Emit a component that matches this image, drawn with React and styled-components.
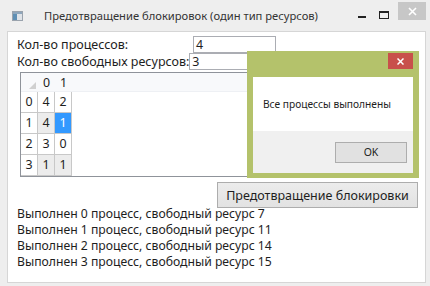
import styled, { createGlobalStyle } from 'styled-components'

const GlobalStyle = createGlobalStyle`
  html, body {
    margin: 0;
    padding: 0;
    background: #eeeeee;
    font-family: "Noto Sans", "Open Sans", sans-serif;
    color: #1e1e1e;
  }
`

const Window = styled.div`
  position: relative;
  width: 430px;
  height: 286px;
  box-sizing: border-box;
  display: flex;
  flex-direction: column;
  padding: 0 4px 3px 7px;
  background: #eeeeee;
  overflow: hidden;
`

const TitleBar = styled.div`
  height: 31px;
  display: flex;
  align-items: center;
  margin-left: -7px;
  margin-right: -4px;
`

const AppIcon = styled.svg`
  margin-left: 12px;
  width: 11px;
  height: 10px;
`

const Title = styled.div`
  margin-left: 21px;
  font-size: 11.2px;
  color: #333;
  flex: 1;
`

const Caption = styled.div`
  width: ${({ $w }) => $w}px;
  height: 18px;
  align-self: flex-start;
  margin-top: ${({ $top }) => $top || 0}px;
  display: flex;
  align-items: center;
  justify-content: center;
  background: ${({ $bg }) => $bg || 'transparent'};
`

const Client = styled.div`
  flex: 1;
  background: #fff;
  border: 1px solid #d6d6d6;
  padding: 3px 7px 0 9px;
  display: flex;
  flex-direction: column;
`

const FormRow = styled.div`
  display: flex;
  align-items: center;
  height: 17px;
  margin-top: ${({ $mt }) => $mt}px;
`

const Label = styled.div`
  font-size: 12.5px;
  width: ${({ $w }) => ($w ? `${$w}px` : 'auto')};
  white-space: nowrap;
`

const TextBox = styled.div`
  box-sizing: border-box;
  width: ${({ $w }) => $w}px;
  height: 17px;
  border: 1px solid #abadb3;
  font-size: 12.4px;
  line-height: 15px;
  padding-left: 2px;
`

const DataGrid = styled.div`
  margin: 2px 0 0 3px;
  width: 256px;
  height: 103px;
  border: 1px solid #8f939a;
  display: flex;
  flex-direction: column;
`

const HeaderRow = styled.div`
  height: 19px;
  display: flex;
  background: #f8f9fb;
  box-shadow: inset 0 -1px 0 #eef0f4;
`

const Corner = styled.div`
  position: relative;
  width: 17px;
  &::after {
    content: '';
    position: absolute;
    right: 2px;
    bottom: 3px;
    border-style: solid;
    border-width: 0 0 7px 7px;
    border-color: transparent transparent #d0d0d0 transparent;
  }
`

const ColHeader = styled.div`
  width: 17px;
  text-align: center;
  font-size: 12.4px;
  line-height: 19px;
`

const Row = styled.div`
  height: 21px;
  display: flex;
`

const RowHeader = styled.div`
  box-sizing: border-box;
  width: 17px;
  border-bottom: 1px solid #c8c8c8;
  border-right: 1px solid #c8c8c8;
  font-size: 12.4px;
  line-height: 20px;
  text-align: center;
`

const Cell = styled.div`
  box-sizing: border-box;
  width: 17px;
  border-bottom: 1px solid #c8c8c8;
  border-right: 1px solid #c8c8c8;
  font-size: 12.4px;
  line-height: 20px;
  text-align: center;
  background: ${({ $selected, $alt }) => ($selected ? '#3399ff' : $alt ? '#ececec' : '#fff')};
  color: ${({ $selected }) => ($selected ? '#fff' : '#1e1e1e')};
`

const ActionButton = styled.div`
  align-self: flex-end;
  margin-top: 5px;
  box-sizing: border-box;
  width: 201px;
  height: 26px;
  border: 1px solid #adadad;
  background: linear-gradient(#ececec, #e2e2e2);
  font-size: 12.5px;
  display: flex;
  align-items: center;
  justify-content: center;
`

const Log = styled.div`
  font-size: 12.2px;
  line-height: 16px;
  margin-top: -2px;
`

const Dialog = styled.div`
  position: absolute;
  left: 247px;
  top: 51px;
  width: 172px;
  height: 127px;
  box-sizing: border-box;
  background: #b4c26b;
  padding: 26px 6px 5px 6px;
  display: flex;
  flex-direction: column;
`

const DialogClose = styled.div`
  position: absolute;
  right: 6px;
  top: 2px;
  width: 25px;
  height: 16px;
  background: #c8504b;
  display: flex;
  align-items: center;
  justify-content: center;
`

const DialogBody = styled.div`
  height: 54px;
  background: #fff;
  display: flex;
  align-items: center;
  padding-left: 10px;
  font-size: 10.2px;
`

const DialogFooter = styled.div`
  flex: 1;
  background: #f0f0f0;
  display: flex;
  justify-content: flex-end;
  align-items: center;
  padding-right: 6px;
`

const OkButton = styled.div`
  box-sizing: border-box;
  width: 72px;
  height: 21px;
  border: 1px solid #adadad;
  background: #e1e1e1;
  font-size: 10.5px;
  display: flex;
  align-items: center;
  justify-content: center;
`

const matrix = [
  [4, 2],
  [4, 1],
  [3, 0],
  [1, 1],
]

const log = [7, 11, 14, 15]

export default function App() {
  return (
    <>
      <GlobalStyle />
      <Window>
        <TitleBar>
          <AppIcon viewBox="0 0 11 10">
            <rect x="0.5" y="0.5" width="10" height="9" fill="#dfe3e8" stroke="#9aa3ad" />
            <rect x="1" y="1" width="4" height="8" fill="#5f8fb4" />
            <rect x="1" y="1" width="9" height="2" fill="#8ea6bc" />
          </AppIcon>
          <Title>Предотвращение блокировок (один тип ресурсов)</Title>
          <Caption $w={22} $top={6}>
            <svg width="8" height="8" viewBox="0 0 8 8">
              <rect x="0" y="5" width="8" height="2" fill="#222" />
            </svg>
          </Caption>
          <Caption $w={22} $top={6}>
            <svg width="10" height="8" viewBox="0 0 10 8">
              <rect x="0.5" y="0.5" width="9" height="7" fill="none" stroke="#222" />
              <rect x="0" y="0" width="10" height="2" fill="#222" />
            </svg>
          </Caption>
          <Caption $w={28} $top={2} $bg="#c7c7c7" style={{ marginRight: 4, marginLeft: 3 }}>
            <svg width="9" height="9" viewBox="0 0 9 9">
              <path d="M1 1 L8 8 M8 1 L1 8" stroke="#fff" strokeWidth="1.6" />
            </svg>
          </Caption>
        </TitleBar>
        <Client>
          <FormRow $mt={1}>
            <Label $w={176}>Кол-во процессов:</Label>
            <TextBox $w={83}>4</TextBox>
          </FormRow>
          <FormRow $mt={0}>
            <Label>Кол-во свободных ресурсов:</Label>
            <TextBox $w={87}>3</TextBox>
          </FormRow>
          <DataGrid>
            <HeaderRow>
              <Corner />
              <ColHeader>0</ColHeader>
              <ColHeader>1</ColHeader>
            </HeaderRow>
            {matrix.map((row, i) => (
              <Row key={i}>
                <RowHeader>{i}</RowHeader>
                {row.map((v, j) => (
                  <Cell key={j} $alt={i % 2 === 1} $selected={i === 1 && j === 1}>
                    {v}
                  </Cell>
                ))}
              </Row>
            ))}
          </DataGrid>
          <ActionButton>Предотвращение блокировки</ActionButton>
          <Log>
            {log.map((r, i) => (
              <div key={i}>
                Выполнен {i} процесс, свободный ресурс {r}
              </div>
            ))}
          </Log>
        </Client>
        <Dialog>
          <DialogClose>
            <svg width="7" height="7" viewBox="0 0 7 7">
              <path d="M0.5 0.5 L6.5 6.5 M6.5 0.5 L0.5 6.5" stroke="#fff" strokeWidth="1.5" />
            </svg>
          </DialogClose>
          <DialogBody>Все процессы выполнены</DialogBody>
          <DialogFooter>
            <OkButton>OK</OkButton>
          </DialogFooter>
        </Dialog>
      </Window>
    </>
  )
}
